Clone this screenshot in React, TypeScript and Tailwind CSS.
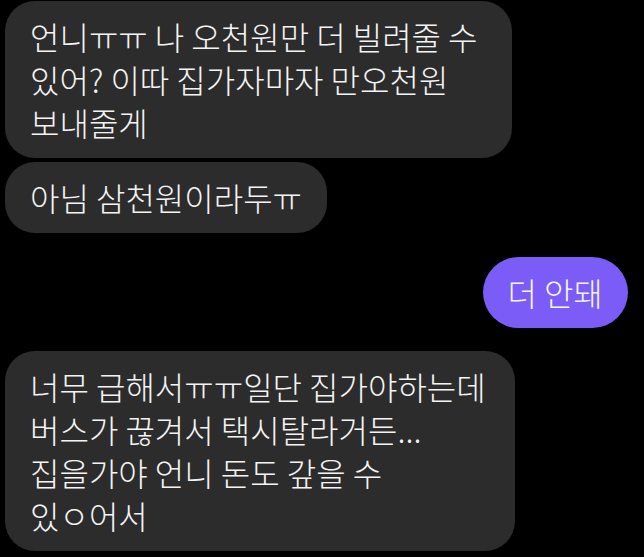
import React from "react"

type Msg = { from: "them" | "me"; lines: string[]; width?: string }

const font = { fontFamily: '"Noto Sans CJK KR", "Noto Sans", sans-serif' }

function Bubble({ msg }: { msg: Msg }) {
  if (msg.from === "me") {
    return (
      <div className="self-end w-fit rounded-full bg-[#7b5cf6] px-[25px] py-[14px] text-[32px] font-light leading-[43px] text-[#f7f5ff] whitespace-nowrap">
        {msg.lines[0]}
      </div>
    )
  }
  return (
    <div className={`${msg.width ?? "w-fit"} rounded-[30px] bg-[#2c2c2c] px-[25px] py-[14px] text-[32px] font-light leading-[43px] text-[#f4f4f4]`}>
      {msg.lines.map((l, i) => (
        <div key={i} className="whitespace-nowrap">{l}</div>
      ))}
    </div>
  )
}

export default function App() {
  return (
    <div className="w-[644px] h-[557px] overflow-hidden bg-black pl-[5px] pr-[16px] pt-[1px] flex flex-col" style={font}>
      <Bubble msg={{ from: "them", width: "w-[507px]", lines: ["언니ㅠㅠ 나 오천원만 더 빌려줄 수", "있어? 이따 집가자마자 만오천원", "보내줄게"] }} />
      <div className="mt-[4px]">
        <Bubble msg={{ from: "them", lines: ["아님 삼천원이라두ㅠ"] }} />
      </div>
      <div className="mt-[24px] flex flex-col">
        <Bubble msg={{ from: "me", lines: ["더 안돼"] }} />
      </div>
      <div className="mt-[23px]">
        <Bubble msg={{ from: "them", width: "w-[510px]", lines: ["너무 급해서ㅠㅠ일단 집가야하는데", "버스가 끊겨서 택시탈라거든...", "집을가야 언니 돈도 갚을 수", "있ㅇ어서"] }} />
      </div>
    </div>
  )
}
